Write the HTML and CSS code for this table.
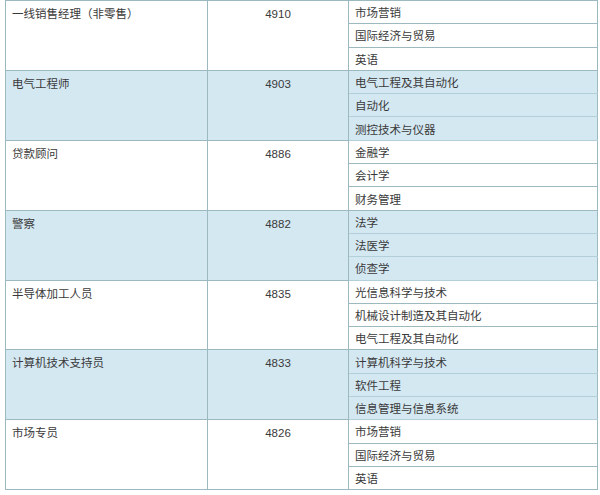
FILE: index.html
```html
<!DOCTYPE html>
<html lang="zh">
<head>
<meta charset="utf-8">
<link rel="stylesheet" href="styles.css">
</head>
<body>
<table class="jobs">
  <colgroup><col class="c1"><col class="c2"><col class="c3"></colgroup>
  <tbody class="g">
    <tr><td rowspan="3" class="job">一线销售经理（非零售）</td><td rowspan="3" class="num">4910</td><td class="major">市场营销</td></tr>
    <tr><td class="major">国际经济与贸易</td></tr>
    <tr><td class="major">英语</td></tr>
  </tbody>
  <tbody class="g blue">
    <tr><td rowspan="3" class="job">电气工程师</td><td rowspan="3" class="num">4903</td><td class="major">电气工程及其自动化</td></tr>
    <tr><td class="major">自动化</td></tr>
    <tr><td class="major">测控技术与仪器</td></tr>
  </tbody>
  <tbody class="g">
    <tr><td rowspan="3" class="job">贷款顾问</td><td rowspan="3" class="num">4886</td><td class="major">金融学</td></tr>
    <tr><td class="major">会计学</td></tr>
    <tr><td class="major">财务管理</td></tr>
  </tbody>
  <tbody class="g blue">
    <tr><td rowspan="3" class="job">警察</td><td rowspan="3" class="num">4882</td><td class="major">法学</td></tr>
    <tr><td class="major">法医学</td></tr>
    <tr><td class="major">侦查学</td></tr>
  </tbody>
  <tbody class="g">
    <tr><td rowspan="3" class="job">半导体加工人员</td><td rowspan="3" class="num">4835</td><td class="major">光信息科学与技术</td></tr>
    <tr><td class="major">机械设计制造及其自动化</td></tr>
    <tr><td class="major">电气工程及其自动化</td></tr>
  </tbody>
  <tbody class="g blue">
    <tr><td rowspan="3" class="job">计算机技术支持员</td><td rowspan="3" class="num">4833</td><td class="major">计算机科学与技术</td></tr>
    <tr><td class="major">软件工程</td></tr>
    <tr><td class="major">信息管理与信息系统</td></tr>
  </tbody>
  <tbody class="g">
    <tr><td rowspan="3" class="job">市场专员</td><td rowspan="3" class="num">4826</td><td class="major">市场营销</td></tr>
    <tr><td class="major">国际经济与贸易</td></tr>
    <tr><td class="major">英语</td></tr>
  </tbody>
</table>
</body>
</html>
```
FILE: styles.css
```css
html, body {
  margin: 0;
  padding: 0;
  background: #ffffff;
}
body {
  padding-left: 5px;
}
.jobs {
  border-collapse: collapse;
  table-layout: fixed;
  width: 592px;
  font-family: "Liberation Sans", "Noto Sans CJK SC", sans-serif;
  font-size: 11.5px;
  color: #3a3a3a;
}
.c1 { width: 202px; }
.c2 { width: 141px; }
.c3 { width: 249px; }
.jobs tr {
  height: 23.3px;
}
.jobs td {
  border: 1px solid #9bb9be;
  line-height: 16px;
  padding: 4px 6px 2px 6px;
  vertical-align: middle;
  white-space: nowrap;
  overflow: hidden;
}
.jobs td.job,
.jobs td.num {
  vertical-align: top;
  padding-top: 5px;
}
.jobs td.num {
  text-align: center;
  padding-left: 0;
  padding-right: 0;
}
.blue td {
  background: #d4e8f2;
}
.blue td.major {
  border-top-color: #b3d0da;
  border-bottom-color: #b3d0da;
}
```
